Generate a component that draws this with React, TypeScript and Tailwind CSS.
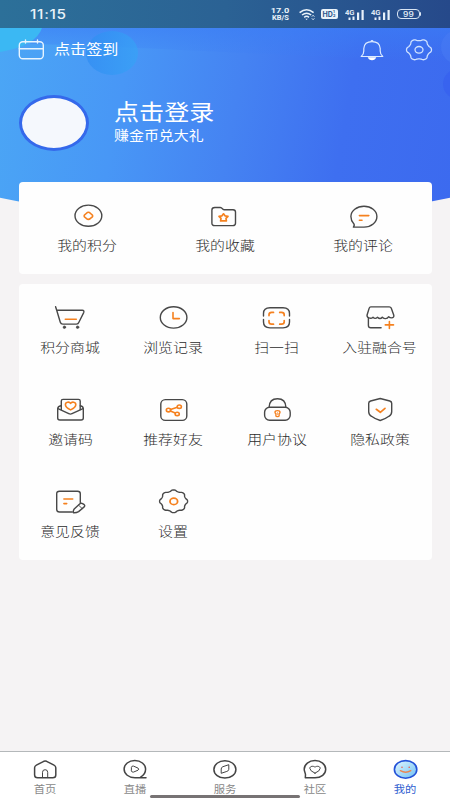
import { ReactNode } from "react";
import clsx from "clsx";

const ORANGE = "#f5811f";

// closed outline with soft lobes, used by both gear icons
function lobes(
  cx: number,
  cy: number,
  rx: number,
  ry: number,
  count: number,
  depth: number
) {
  const points: string[] = [];
  for (let i = 0; i < 120; i++) {
    const a = (i / 120) * Math.PI * 2;
    const r = 1 + (depth * Math.tanh(1.4 * Math.cos(count * a))) / 0.885;
    const x = cx + rx * r * Math.cos(a);
    const y = cy + ry * r * Math.sin(a);
    points.push(`${x.toFixed(2)} ${y.toFixed(2)}`);
  }
  return `M${points.join("L")}Z`;
}

function Icon({ children }: { children: ReactNode }) {
  return (
    <svg
      width="34"
      height="28"
      viewBox="0 0 34 28"
      fill="none"
      stroke="#484848"
      strokeWidth="1.4"
      strokeLinecap="round"
      strokeLinejoin="round"
    >
      {children}
    </svg>
  );
}

type Entry = { label: string; icon: ReactNode };

const shortcuts: Entry[] = [
  {
    label: "我的积分",
    icon: (
      <>
        <ellipse cx="17.4" cy="13.7" rx="13.4" ry="10.6" />
        <path
          d="M17.4 10.2c1.2 0 1.8.9 2.5 1.6s1.8 1.1 1.8 2.1-1 1.4-1.8 2.1-1.3 1.4-2.5 1.4-1.8-.8-2.5-1.4-1.8-1.1-1.8-2.1 1.1-1.4 1.8-2.1 1.3-1.6 2.5-1.6Z"
          stroke={ORANGE}
          strokeWidth="1.6"
        />
      </>
    ),
  },
  {
    label: "我的收藏",
    icon: (
      <>
        <path d="M3.9 8q0-2.5 3-2.5h5.4q1.2 0 2 1.2t2 1.1H25q2.5 0 2.5 2.2v11.2q0 2.4-2.8 2.4H6.8q-2.9 0-2.9-2.4Z" />
        <path
          d="m15.5 11.8 1.5 2 3 .5-2 2 .4 2.6h-5.8l.4-2.6-2-2 3-.5Z"
          stroke={ORANGE}
          strokeWidth="1.7"
        />
      </>
    ),
  },
  {
    label: "我的评论",
    icon: (
      <>
        <path d="M7.4 25.1H18c7.3 0 12.9-4.7 12.900-10.500S25.200 4.300 18 4.300 4.900 8.900 4.900 14.600c0 3 1.100 5.200 2.700 6.800.9 1 .7 2.500-.2 3.700Z" />
        <path d="M13.4 13.6h9.400M13.400 18.300h2.600" stroke={ORANGE} strokeWidth="1.6" />
      </>
    ),
  },
];

const services: Entry[] = [
  {
    label: "积分商城",
    icon: (
      <>
        <path d="M1.6 2.7 2.7 6.3l3.6 11.900q.6 1.900 2.500 1.900h13.600q1.900 0 2.500-1.900l4.800-9.600q.8-2.300-1.400-2.300H2.700" />
        <path d="M11.3 15.3h11" stroke={ORANGE} strokeWidth="1.6" />
        <g fill="#484848" strokeWidth=".6">
          <circle cx="10.4" cy="23.2" r="1.3" />
          <circle cx="23.6" cy="23.2" r="1.3" />
        </g>
      </>
    ),
  },
  {
    label: "浏览记录",
    icon: (
      <>
        <ellipse cx="16.6" cy="13.4" rx="13.3" ry="10.7" />
        <path d="M16 8.500v6.100h6.400" stroke={ORANGE} strokeWidth="1.6" />
      </>
    ),
  },
  {
    label: "扫一扫",
    icon: (
      <>
        <path d="M3.500 12V9.500Q3.500 3.700 10 3.700h13q6.500 0 6.500 5.800V12M3.500 15.500v2.600q0 5.800 6.500 5.800h13q6.500 0 6.500-5.800v-2.600" />
        <path
          d="M9 11.600v-.8q0-2.400 2.700-2.400h1.800M19.700 8.400h1.800q2.700 0 2.700 2.400v.8M24.200 16.600v1.200q0 2.400-2.700 2.400h-1.800M13.500 20.200h-1.800Q9 20.200 9 17.800v-1.200"
          stroke={ORANGE}
          strokeWidth="1.7"
        />
      </>
    ),
  },
  {
    label: "入驻融合号",
    icon: (
      <>
        <path d="M7.800 2.900h18.400q1.500 0 2 1.200l2.600 7.200q.4 2.400-2.200 2.600-1.800 0-2.900-1.200-1.300 2.200-3.700 1.900-1.800 0-2.700-1.400-2.200 2.600-4.800 0-2.400 2.300-4.500 0-1.500 1.400-3.300.9-2.600-.3-2.700-2.800l2.200-7.200q.4-1.200 1.600-1.200Z" />
        <path d="M5.400 14v7.500q0 2.200 2.400 2.200h10.300" />
        <path d="M22.300 20.900h8.200M26.400 17.500v6.900" stroke={ORANGE} strokeWidth="1.6" />
      </>
    ),
  },
  {
    label: "邀请码",
    icon: (
      <>
        <path d="M7.300 13.500V4.900q0-1.500 1.700-1.500h15.500q1.700 0 1.700 1.500v8.600" />
        <path d="M7 9.800q-3.300.7-3.300 3V22q0 2 2.200 2h21.200q2.200 0 2.200-2v-9.200q0-2.300-3-3" />
        <path d="m4 12.600 10.800 5.100q1.600.8 3.200 0l11-5.100" />
        <path
          d="M16.600 13.900q-5.200-2.600-5.200-5.200c0-2.800 3.900-3.300 5.200-1.300 1.300-2 5.200-1.500 5.200 1.300q0 2.600-5.200 5.200Z"
          stroke={ORANGE}
          strokeWidth="1.6"
        />
      </>
    ),
  },
  {
    label: "推荐好友",
    icon: (
      <>
        <rect x="3.8" y="3.6" width="26" height="20.800" rx="4.500" />
        <g stroke={ORANGE} strokeWidth="1.6">
          <path d="m13.500 13.400 6.900-2.200M13.400 15l4.800 2.100" />
          <ellipse cx="11.5" cy="14.1" rx="2.200" ry="1.800" />
          <ellipse cx="22.3" cy="10.7" rx="2.100" ry="1.700" />
          <ellipse cx="20.2" cy="17.9" rx="2.100" ry="1.700" />
        </g>
      </>
    ),
  },
  {
    label: "用户协议",
    icon: (
      <>
        <path d="M9.100 11.300Q9.300 2.700 17.500 2.700t8.400 8.600" />
        <rect x="4.6" y="11.3" width="25.6" height="13" rx="5" />
        <path
          d="M15 16.300q0-1.700 2.500-1.700t2.500 1.700q0 1-.9 1.400v2q0 .9-1.600.9t-1.600-.9v-2q-.9-.4-.9-1.400Z"
          stroke={ORANGE}
        />
        <path d="M17.500 16.500v2.300" stroke={ORANGE} strokeWidth=".6" />
      </>
    ),
  },
  {
    label: "隐私政策",
    icon: (
      <>
        <path d="M17.200 2.500 26.800 5q1.900.6 1.900 2.300v8.500q0 3-2.800 4.500-3.500 2.700-8.700 4.200-5.200-1.500-8.700-4.200-2.800-1.500-2.800-4.500V7.300Q5.700 5.600 7.600 5Z" />
        <path d="m13.300 13.300 4 3 4.700-4" stroke={ORANGE} strokeWidth="1.7" />
      </>
    ),
  },
  {
    label: "意见反馈",
    icon: (
      <>
        <path d="M18.300 24H5.500q-2.800 0-2.800-2.400V5.700q0-2.400 2.800-2.400h18q2.800 0 2.800 2.400v8.800" />
        <path d="M9.900 11h8.800M9.900 15.600h2.800" stroke={ORANGE} strokeWidth="1.6" />
        <path d="m20.200 21 5.700-5.200q1.300-1 2.700-.2l1.600 1.100q1.100 1 0 2.200l-5.600 4.700q-2.200 1.300-5.200 1.100-.4-2.200.8-3.700Z" />
        <path d="m24.600 17.200 3.400 3.200" strokeWidth=".9" />
      </>
    ),
  },
  {
    label: "设置",
    icon: (
      <>
        <path d={lobes(16.6, 13.3, 13.2, 10.7, 8, 0.06)} />
        <ellipse
          cx="16.8"
          cy="13.4"
          rx="3.8"
          ry="3.2"
          stroke={ORANGE}
          strokeWidth="1.8"
        />
      </>
    ),
  },
];

const tabs: Entry[] = [
  {
    label: "首页",
    icon: (
      <>
        <path d="m12.800 2.300-7.400 3.800Q3.600 7 3.600 8.800V16q0 2.800 3 2.800h15.200q3 0 3-2.800V8.800q0-1.800-1.800-2.700l-7.400-3.800q-1.400-.6-2.800 0Z" />
        <path d="M11.500 18.600v-5.300q0-2.600 2.600-2.600t2.600 2.600v5.300" strokeWidth="1" />
      </>
    ),
  },
  {
    label: "直播",
    icon: (
      <>
        <path d="M25 18.800H14c-6.300 0-10.900-3.800-10.900-8.700s4.800-8.500 10.700-8.500 10.800 3.600 10.800 8.500c0 3.500-1.800 6.400-5 8" />
        <path d="M10.500 8q.3-1.400 2-.9l4.500 2q1.600 1 0 2.100l-4.500 1.900q-1.500.5-2-.9Z" strokeWidth="1" />
      </>
    ),
  },
  {
    label: "服务",
    icon: (
      <>
        <ellipse cx="13.9" cy="10.4" rx="11" ry="8.7" />
        <path d="M10.200 13.900V10q0-1.700 1.700-2.300l5.900-2v4.600q0 1.500-1.600 2Z" strokeWidth="1" />
      </>
    ),
  },
  {
    label: "社区",
    icon: (
      <>
        <path d="M4.300 18.700H14c6.200 0 10.700-3.600 10.700-8.400S20 1.600 14 1.600 3.200 5.500 3.200 10.300c0 2.300 1.300 3.900 1.300 5.400Z" />
        <path
          d="M14 14.200q-5.200-2.300-5.200-4.900c0-2.200 3.800-2.700 5.200-1 1.400-1.700 5.200-1.200 5.200 1q0 2.600-5.200 4.900Z"
          strokeWidth="1"
        />
      </>
    ),
  },
  {
    label: "我的",
    icon: (
      <>
        <defs>
          <linearGradient id="face" x1="0" y1="0" x2="1" y2="1">
            <stop offset="0" stopColor="#e4f8ff" />
            <stop offset="1" stopColor="#6fc0f2" />
          </linearGradient>
        </defs>
        <ellipse
          cx="14.6"
          cy="10.4"
          rx="11.2"
          ry="8.8"
          fill="url(#face)"
          stroke="#2352d8"
          strokeWidth="1.6"
        />
        <path d="M9.400 11.700q5.300 3 10.400 0" stroke="#ea8652" strokeWidth="1.4" />
        <path d="M11 8.200v.1M18.200 8.200v.1" stroke="#f05a4a" strokeWidth="1.6" />
      </>
    ),
  },
];

function Label({ children }: { children: ReactNode }) {
  return (
    <span className="mr-px mt-[5px] scale-x-[1.145] whitespace-nowrap text-[13px] font-light leading-5 text-[#2c2c2c]">
      {children}
    </span>
  );
}

function Signal() {
  return (
    <svg width="20" height="13" viewBox="0 0 20 13" fill="#e8f0fa">
      <text
        x="0"
        y="6.500"
        fontSize="7"
        fontWeight="600"
        fontFamily="Roboto, sans-serif"
        textLength="9.500"
        lengthAdjust="spacingAndGlyphs"
      >
        4G
      </text>
      <rect x="3.5" y="9.5" width="2" height="2.5" />
      <rect x="7.5" y="8.5" width="2" height="3.5" />
      <rect x="12" y="4.5" width="2.2" height="7.5" />
      <rect x="16.5" y="2" width="2.2" height="10" />
    </svg>
  );
}

function StatusBar() {
  return (
    <div className="flex h-7 items-center bg-gradient-to-r from-[#2c7099] via-[#2b6294] to-[#26498a] pl-[30px] pr-[29px] text-[#eaf3fa]">
      <span className="origin-left scale-x-[1.18] font-[Inter,sans-serif] text-[13px] font-medium leading-none tracking-[0.6px]">
        11:15
      </span>
      <div className="ml-auto flex items-center">
        <div className="flex w-[19px] flex-col items-center font-[Roboto,sans-serif] font-bold">
          <span className="scale-x-[1.15] text-[8px] leading-[8px]">17.0</span>
          <span className="scale-x-[1.15] text-[6.5px] leading-[6.5px]">
            KB/S
          </span>
        </div>
        <svg
          className="ml-[9px]"
          width="17"
          height="13"
          viewBox="0 0 17 13"
          fill="none"
          stroke="#eaf3fa"
          strokeWidth="1.5"
        >
          <path d="M.6 4.600q7-5.800 14 0M3 7q4.600-3.600 9.200 0M5.200 9.300q2.400-1.900 4.800 0" />
          <path d="M6.300 10.700h2.600l-1.300 1.200Z" fill="#eaf3fa" stroke="none" />
          <path d="m12.900 8.600 1.200-1.300 1.200 1.300M12.900 10.400l1.200 1.300 1.200-1.300" strokeWidth="1" />
        </svg>
        <span className="ml-[5px] flex h-[10px] w-[17px] items-center justify-center rounded-[2px] bg-[#eaf3fa] font-[Inter,sans-serif] text-[7px] font-bold leading-none text-[#2b568c]">
          HD
          <span className="text-[4px] leading-[4px]">
            1<br />2
          </span>
        </span>
        <span className="ml-[7px]">
          <Signal />
        </span>
        <span className="ml-[6px]">
          <Signal />
        </span>
        <span className="ml-[6px] flex h-[10px] w-[23px] items-center justify-center rounded-[4px] border-[1.5px] border-[#d9e5f3]">
          <span className="scale-x-[1.2] font-[Inter,sans-serif] text-[7px] font-medium leading-none">
            99
          </span>
        </span>
        <span className="h-1 w-[1.5px] rounded-r bg-[#d9e5f3]" />
      </div>
    </div>
  );
}

function Header() {
  return (
    <header className="relative h-[220px] overflow-hidden bg-[linear-gradient(100deg,#4ba7f5_0%,#4897f6_28%,#4583f2_52%,#3e6ff0_75%,#3c6aef_100%)] text-white [clip-path:ellipse(500px_208px_at_50%_12px)]">
      <svg className="absolute inset-0" width="450" height="220" viewBox="0 0 450 220">
        <defs>
          <linearGradient id="drop" x1="0" x2="1">
            <stop offset="0" stopColor="#2f8cf2" />
            <stop offset="1" stopColor="#36a3f6" />
          </linearGradient>
          <linearGradient id="haze" x1="0" y1="0" x2="0" y2="1">
            <stop offset="0" stopColor="#3b7df5" stopOpacity=".6" />
            <stop offset="1" stopColor="#3b7df5" stopOpacity="0" />
          </linearGradient>
        </defs>
        <path d="M40 28H450V62Q300 56 180 50T30 44Z" fill="url(#haze)" />
        <path d="M0 28H42Q36 46 0 52Z" fill="#3bb8f3" />
        <ellipse cx="112" cy="53" rx="26" ry="22" fill="url(#drop)" opacity=".7" />
        <circle cx="458" cy="47" r="17" fill="#4a7cf4" opacity=".5" />
        <circle cx="458" cy="84" r="15" fill="#345cf0" opacity=".5" />
      </svg>
      <div className="relative">
        <StatusBar />
        <div className="flex h-[43px] items-center pl-[18px] pr-[17px]">
          <svg
            width="27"
            height="22"
            viewBox="0 0 27 22"
            fill="none"
            stroke="#e6f4ff"
            strokeWidth="1.4"
            strokeLinecap="round"
          >
            <rect x="1.3" y="2.7" width="24" height="17" rx="3.5" />
            <path d="M1.300 9.700h24M7.500 1v3M19.500 1v3" />
          </svg>
          <span className="-mt-[3px] ml-[9px] origin-left scale-x-[1.15] text-[14px] leading-5">
            点击签到
          </span>
          <svg
            className="ml-auto"
            width="24"
            height="22"
            viewBox="0 0 24 22"
            fill="none"
            stroke="#dcebff"
            strokeWidth="1.2"
            strokeLinejoin="round"
          >
            <path d="M1.200 17.500Q3.800 15.500 3.800 12V9.500Q4.300 2.600 12 2.600t8.200 6.900V12q0 3.500 2.600 5.500Z" />
            <path d="M10.800 2.500q1.200-2 2.400 0" />
            <path d="M7.700 18.300h8.600q-1.200 2.900-4.300 2.900t-4.300-2.900Z" fill="#fff" stroke="none" />
          </svg>
          <svg
            className="ml-[21px]"
            width="28"
            height="22"
            viewBox="0 0 28 22"
            fill="none"
            stroke="#cfe2ff"
            strokeWidth="1.3"
          >
            <path d={lobes(14, 10.8, 11.5, 10, 6, 0.085)} />
            <ellipse cx="14" cy="10.8" rx="4" ry="3.3" />
          </svg>
        </div>
        <div className="flex items-start pl-[19px] pt-6">
          <div className="h-[56px] w-[70px] rounded-[50%] border-[3px] border-[#3569eb] bg-[#f5f8fd]" />
          <div className="ml-[25px] flex flex-col items-start">
            <span className="origin-left scale-x-[1.14] text-[22px] leading-[30px]">
              点击登录
            </span>
            <span className="origin-left scale-x-[1.15] text-[13px] leading-5">
              赚金币兑大礼
            </span>
          </div>
        </div>
      </div>
    </header>
  );
}

export default function App() {
  return (
    <div className="relative flex h-[800px] w-[450px] flex-col overflow-hidden bg-[#f5f3f4] font-['Noto_Sans_CJK_SC',sans-serif]">
      <Header />
      <main className="relative -mt-[38px] flex-1 pl-[19px] pr-[18px]">
        <section className="grid h-[92px] grid-cols-3 rounded-[4px] bg-[#fefefe]">
          {shortcuts.map(({ label, icon }) => (
            <div key={label} className="flex flex-col items-center pt-5">
              <Icon>{icon}</Icon>
              <Label>{label}</Label>
            </div>
          ))}
        </section>
        <section className="mt-2.5 grid h-[276px] grid-cols-4 grid-rows-3 rounded-[4px] bg-[#fefefe]">
          {services.map(({ label, icon }) => (
            <div key={label} className="flex flex-col items-center pt-5">
              <Icon>{icon}</Icon>
              <Label>{label}</Label>
            </div>
          ))}
        </section>
      </main>
      <nav className="grid h-[49px] grid-cols-5 border-t border-[#b4b8ba] bg-white">
        {tabs.map(({ label, icon }) => (
          <div key={label} className="flex flex-col items-center pt-[7px]">
            <svg
              width="28"
              height="22"
              viewBox="0 0 28 22"
              fill="none"
              stroke="#444"
              strokeWidth="1.5"
              strokeLinecap="round"
              strokeLinejoin="round"
            >
              {icon}
            </svg>
            <span
              className={clsx(
                "scale-x-[1.13] text-[10px] leading-[15px]",
                label === "我的" ? "text-[#3060d0]" : "text-[#888]"
              )}
            >
              {label}
            </span>
          </div>
        ))}
      </nav>
      {/* system gesture bar */}
      <div className="absolute bottom-[2px] left-[150px] h-[3px] w-[150px] rounded-full bg-[#777374]" />
    </div>
  );
}
